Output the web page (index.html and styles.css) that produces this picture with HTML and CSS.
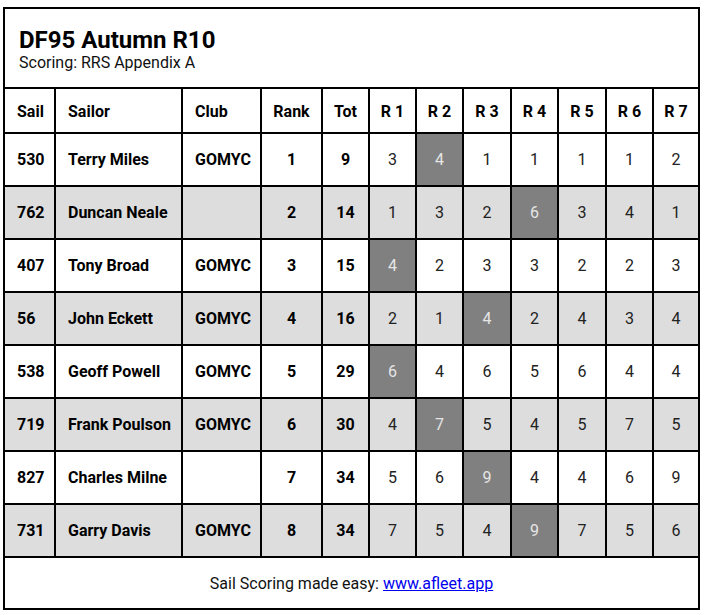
FILE: index.html
```html
<!DOCTYPE html>
<html lang="en">
<head>
<meta charset="utf-8">
<title>DF95 Autumn R10</title>
<link rel="stylesheet" href="styles.css">
</head>
<body>
<div class="card">
  <div class="head">
    <h1 class="title">DF95 Autumn R10</h1>
    <div class="subtitle">Scoring: RRS Appendix A</div>
  </div>
  <table class="results">
    <thead>
      <tr>
        <th class="c-sail">Sail</th>
        <th class="c-sailor">Sailor</th>
        <th class="c-club">Club</th>
        <th class="c-rank">Rank</th>
        <th class="c-tot">Tot</th>
        <th class="c-r1">R 1</th>
        <th class="c-r2">R 2</th>
        <th class="c-r3">R 3</th>
        <th class="c-r4">R 4</th>
        <th class="c-r5">R 5</th>
        <th class="c-r6">R 6</th>
        <th class="c-r7">R 7</th>
      </tr>
    </thead>
    <tbody>
      <tr>
        <td class="b l">530</td><td class="b l">Terry Miles</td><td class="b l">GOMYC</td><td class="b">1</td><td class="b">9</td>
        <td>3</td><td class="drop">4</td><td>1</td><td>1</td><td>1</td><td>1</td><td>2</td>
      </tr>
      <tr class="alt">
        <td class="b l">762</td><td class="b l">Duncan Neale</td><td class="b l"></td><td class="b">2</td><td class="b">14</td>
        <td>1</td><td>3</td><td>2</td><td class="drop">6</td><td>3</td><td>4</td><td>1</td>
      </tr>
      <tr>
        <td class="b l">407</td><td class="b l">Tony Broad</td><td class="b l">GOMYC</td><td class="b">3</td><td class="b">15</td>
        <td class="drop">4</td><td>2</td><td>3</td><td>3</td><td>2</td><td>2</td><td>3</td>
      </tr>
      <tr class="alt">
        <td class="b l">56</td><td class="b l">John Eckett</td><td class="b l">GOMYC</td><td class="b">4</td><td class="b">16</td>
        <td>2</td><td>1</td><td class="drop">4</td><td>2</td><td>4</td><td>3</td><td>4</td>
      </tr>
      <tr>
        <td class="b l">538</td><td class="b l">Geoff Powell</td><td class="b l">GOMYC</td><td class="b">5</td><td class="b">29</td>
        <td class="drop">6</td><td>4</td><td>6</td><td>5</td><td>6</td><td>4</td><td>4</td>
      </tr>
      <tr class="alt">
        <td class="b l">719</td><td class="b l">Frank Poulson</td><td class="b l">GOMYC</td><td class="b">6</td><td class="b">30</td>
        <td>4</td><td class="drop">7</td><td>5</td><td>4</td><td>5</td><td>7</td><td>5</td>
      </tr>
      <tr>
        <td class="b l">827</td><td class="b l">Charles Milne</td><td class="b l"></td><td class="b">7</td><td class="b">34</td>
        <td>5</td><td>6</td><td class="drop">9</td><td>4</td><td>4</td><td>6</td><td>9</td>
      </tr>
      <tr class="alt">
        <td class="b l">731</td><td class="b l">Garry Davis</td><td class="b l">GOMYC</td><td class="b">8</td><td class="b">34</td>
        <td>7</td><td>5</td><td>4</td><td class="drop">9</td><td>7</td><td>5</td><td>6</td>
      </tr>
    </tbody>
  </table>
  <div class="foot">Sail Scoring made easy: <a href="#">www.afleet.app</a></div>
</div>
</body>
</html>
```

FILE: styles.css
```css
html, body {
  background: #ffffff;
}
body {
  margin: 7px 0 0 3px;
  font-family: Roboto, "Liberation Sans", Arial, sans-serif;
  color: #000;
}
.card {
  width: 693px;
  border: 2px solid #000;
  background: #fff;
}
.head {
  height: 78px;
  box-sizing: border-box;
  padding: 18px 0 0 14px;
}
.title {
  margin: 0;
  font-size: 24px;
  line-height: 27px;
  font-weight: 700;
}
.subtitle {
  font-size: 16px;
  line-height: 18px;
  color: #111;
}
.results {
  width: 693px;
  border-collapse: separate;
  border-spacing: 0;
  table-layout: fixed;
  font-size: 16px;
}
.results th, .results td {
  box-sizing: border-box;
  border-top: 2px solid #000;
  border-left: 2px solid #000;
  text-align: center;
  vertical-align: middle;
  padding: 0;
}
.results th:first-child, .results td:first-child {
  border-left: none;
}
.results th {
  height: 45px;
  font-weight: 700;
  padding-top: 1px;
}
.results td {
  height: 53px;
  color: #222;
}
.results th.c-sail, .results th.c-sailor, .results th.c-club,
.results td.l {
  text-align: left;
  padding-left: 12px;
}
.results td.b {
  font-weight: 700;
  color: #000;
}
.c-sail { width: 49px; }
.c-sailor { width: 127px; }
.c-club { width: 79px; }
.c-rank { width: 61px; }
.c-tot { width: 47px; }
.c-r1 { width: 47px; }
.c-r2 { width: 47px; }
.c-r3 { width: 48px; }
.c-r4 { width: 47px; }
.c-r5 { width: 48px; }
.c-r6 { width: 47px; }
.c-r7 { width: 46px; }
.results tr.alt td {
  background: #dddddd;
}
.results td.drop, .results tr.alt td.drop {
  background: #808080;
  color: #e6e6e6;
}
.foot {
  border-top: 2px solid #000;
  height: 50px;
  display: flex;
  align-items: center;
  justify-content: center;
  font-size: 16px;
  color: #111;
}
.foot a {
  color: #0000ee;
  text-decoration: underline;
  margin-left: 4px;
}
```
